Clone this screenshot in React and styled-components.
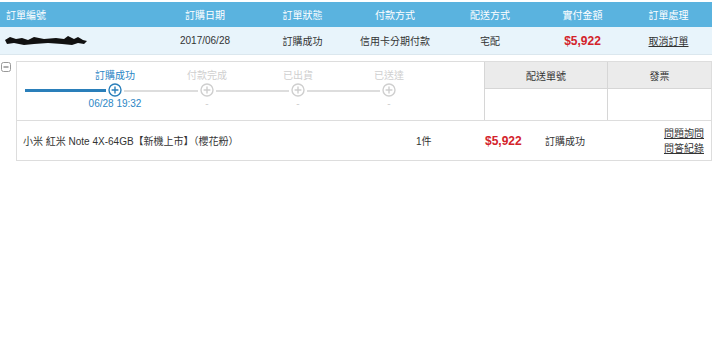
import React from 'react';
import styled, { createGlobalStyle } from 'styled-components';

const GlobalStyle = createGlobalStyle`
  body {
    margin: 0;
    background: #ffffff;
    font-family: "Liberation Sans", "Noto Sans CJK TC", Arial, sans-serif;
    font-size: 10px;
    color: #333333;
  }
`;

const Page = styled.div`
  width: 712px;
  padding-top: 2px;
`;

const COLS = '155px 100px 95px 90px 100px 85px 87px';

const HeadRow = styled.div`
  display: grid;
  grid-template-columns: ${COLS};
  height: 25px;
  align-items: center;
  background: #5ab3df;
  color: #ffffff;
`;

const HeadCell = styled.div`
  text-align: ${props => (props.left ? 'left' : 'center')};
  padding-left: ${props => (props.left ? '6px' : '0')};
`;

const OrderRow = styled.div`
  display: grid;
  grid-template-columns: ${COLS};
  height: 27px;
  align-items: center;
  background: #e8f4fb;
  border-bottom: 1px solid #dbe7ee;
`;

const Cell = styled.div`
  text-align: center;
  display: flex;
  justify-content: ${props => (props.left ? 'flex-start' : 'center')};
  padding-left: ${props => (props.left ? '4px' : '0')};
`;

const Price = styled.span`
  color: #d3232b;
  font-weight: bold;
  font-size: 12px;
`;

const LinkText = styled.span`
  text-decoration: underline;
  color: #333333;
  cursor: pointer;
`;

const Detail = styled.div`
  display: flex;
  margin-top: 6px;
`;

const Toggle = styled.div`
  width: 15px;
  padding-left: 1px;
  padding-top: 1px;
`;

const DetailBody = styled.div`
  width: 697px;
`;

const TrackBox = styled.div`
  display: flex;
  height: 58px;
  border: 1px solid #dddddd;
`;

const Progress = styled.div`
  flex: 1;
  display: flex;
  align-items: flex-start;
  padding: 7px 0 0 8px;
`;

const Step = styled.div`
  width: 14px;
  display: flex;
  flex-direction: column;
  align-items: center;
`;

const StepText = styled.div`
  white-space: nowrap;
  height: 14px;
  line-height: 14px;
  color: ${props => (props.active ? '#2b86c5' : '#cfcfcf')};
`;

const Connector = styled.div`
  width: ${props => props.w}px;
  height: ${props => (props.active ? 3 : 2)}px;
  margin: ${props => (props.active ? 20 : 20.5)}px 2px 0 ${props => (props.lead ? 0 : 2)}px;
  background: ${props => (props.active ? '#2a7fba' : '#dddddd')};
`;

const ShipTable = styled.div`
  width: 226px;
  display: grid;
  grid-template-columns: 123px 103px;
  grid-template-rows: 27px 1fr;
  border-left: 1px solid #d6d6d6;
`;

const ShipHead = styled.div`
  background: #ebebeb;
  display: flex;
  align-items: center;
  justify-content: center;
  color: #333333;
  border-bottom: 1px solid #d6d6d6;
  border-right: ${props => (props.last ? 'none' : '1px solid #d6d6d6')};
`;

const ShipCell = styled.div`
  border-right: ${props => (props.last ? 'none' : '1px solid #d6d6d6')};
`;

const ProductRow = styled.div`
  display: grid;
  grid-template-columns: 393px 69px 60px 119px 1fr;
  align-items: center;
  height: 39px;
  padding-left: 6px;
  border: 1px solid #dddddd;
  border-top: none;
`;

const Actions = styled.div`
  display: flex;
  flex-direction: column;
  gap: 2px;
  line-height: 13px;
`;

const PlusCircle = ({ active }) => {
  const c = active ? '#2a7fba' : '#cfcfcf';
  return (
    <svg width="14" height="14" viewBox="0 0 14 14">
      <circle cx="7" cy="7" r="6" fill="#ffffff" stroke={c} strokeWidth="1.4" />
      <path d="M7 3.6V10.4M3.6 7H10.4" stroke={c} strokeWidth="1.4" />
    </svg>
  );
};

const MinusBox = () => (
  <svg width="10" height="10" viewBox="0 0 10 10">
    <rect x="0.5" y="0.5" width="9" height="9" rx="2" fill="#ffffff" stroke="#999999" />
    <path d="M2.5 5H7.5" stroke="#777777" strokeWidth="1.2" />
  </svg>
);

const Redacted = () => (
  <svg width="84" height="12" viewBox="0 0 84 12">
    <path
      d="M1 5 L6 2 L12 4 L18 3 L24 5 L30 2 L40 4 L52 3 L60 4 L64 1 L70 4 L74 2 L79 5 L83 6 L80 9 L74 8 L68 10 L58 9 L44 8 L30 9 L20 10 L10 8 L3 9 Z"
      fill="#111111"
    />
  </svg>
);

const steps = [
  { label: '訂購成功', time: '06/28 19:32', active: true },
  { label: '付款完成', time: '-' },
  { label: '已出貨', time: '-' },
  { label: '已送達', time: '-' },
];

const App = () => (
  <Page>
    <GlobalStyle />
    <HeadRow>
      <HeadCell left>訂單編號</HeadCell>
      <HeadCell>訂購日期</HeadCell>
      <HeadCell>訂單狀態</HeadCell>
      <HeadCell>付款方式</HeadCell>
      <HeadCell>配送方式</HeadCell>
      <HeadCell>實付金額</HeadCell>
      <HeadCell>訂單處理</HeadCell>
    </HeadRow>
    <OrderRow>
      <Cell left><Redacted /></Cell>
      <Cell>2017/06/28</Cell>
      <Cell>訂購成功</Cell>
      <Cell>信用卡分期付款</Cell>
      <Cell>宅配</Cell>
      <Cell><Price>$5,922</Price></Cell>
      <Cell><LinkText>取消訂單</LinkText></Cell>
    </OrderRow>
    <Detail>
      <Toggle><MinusBox /></Toggle>
      <DetailBody>
        <TrackBox>
          <Progress>
            {steps.map((s, i) => (
              <React.Fragment key={s.label}>
                <Connector
                  lead={i === 0}
                  active={i === 0}
                  w={i === 0 ? 81 : i === 1 ? 74 : 73}
                />
                <Step>
                  <StepText active={s.active}>{s.label}</StepText>
                  <PlusCircle active={s.active} />
                  <StepText active={s.active}>{s.time}</StepText>
                </Step>
              </React.Fragment>
            ))}
          </Progress>
          <ShipTable>
            <ShipHead>配送單號</ShipHead>
            <ShipHead last>發票</ShipHead>
            <ShipCell />
            <ShipCell last />
          </ShipTable>
        </TrackBox>
        <ProductRow>
          <div>小米 紅米 Note 4X-64GB【新機上市】（櫻花粉）</div>
          <div>1件</div>
          <div><Price>$5,922</Price></div>
          <div>訂購成功</div>
          <Actions>
            <LinkText>問題詢問</LinkText>
            <LinkText>問答紀錄</LinkText>
          </Actions>
        </ProductRow>
      </DetailBody>
    </Detail>
  </Page>
);

export default App;
